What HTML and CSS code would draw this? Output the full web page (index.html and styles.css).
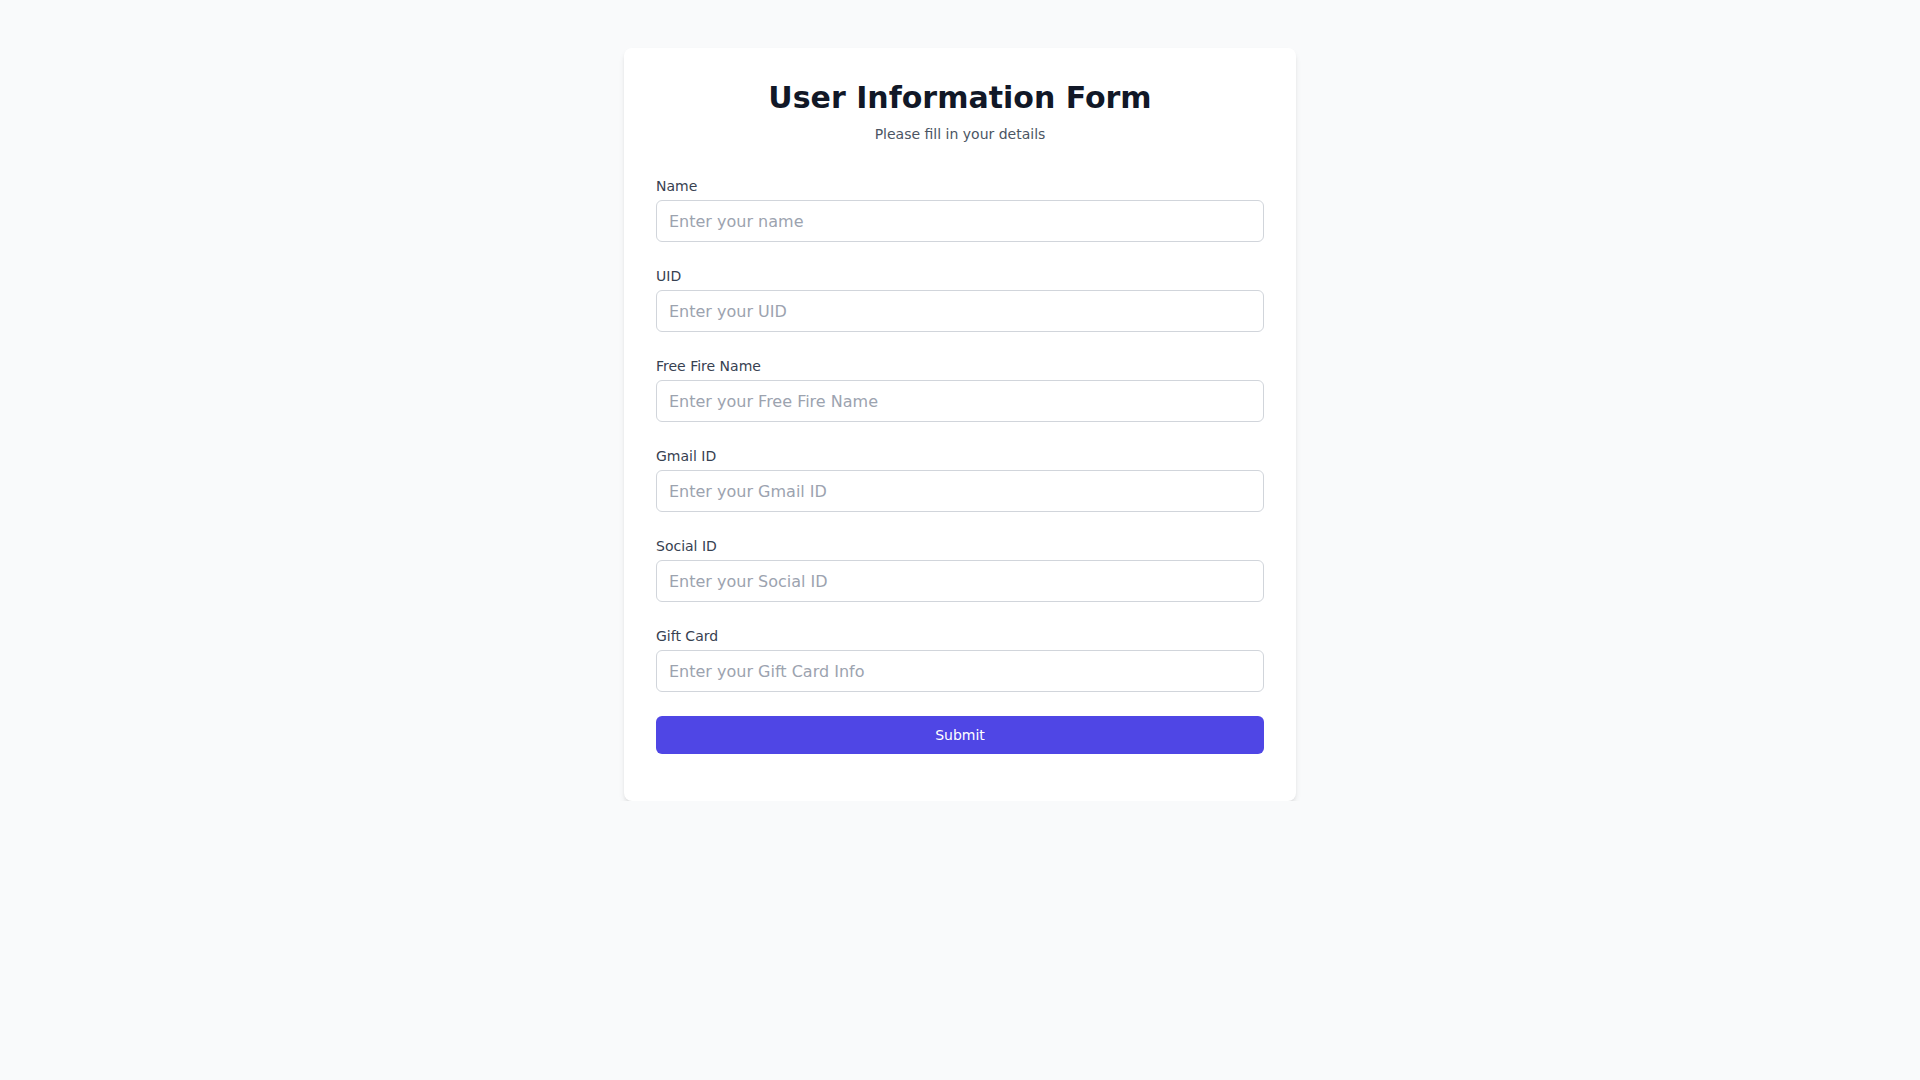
FILE: index.html
```html
<!DOCTYPE html>
<html lang="en">
<head>
<meta charset="utf-8">
<title>User Information Form</title>
<link rel="stylesheet" href="styles.css">
</head>
<body>
<main class="page">
  <div class="card">
    <header class="head">
      <h1 class="title">User Information Form</h1>
      <p class="subtitle">Please fill in your details</p>
    </header>
    <form class="form">
      <div class="field">
        <label class="label" for="name">Name</label>
        <input class="input" id="name" type="text" placeholder="Enter your name">
      </div>
      <div class="field">
        <label class="label" for="uid">UID</label>
        <input class="input" id="uid" type="text" placeholder="Enter your UID">
      </div>
      <div class="field">
        <label class="label" for="ffname">Free Fire Name</label>
        <input class="input" id="ffname" type="text" placeholder="Enter your Free Fire Name">
      </div>
      <div class="field">
        <label class="label" for="gmail">Gmail ID</label>
        <input class="input" id="gmail" type="text" placeholder="Enter your Gmail ID">
      </div>
      <div class="field">
        <label class="label" for="social">Social ID</label>
        <input class="input" id="social" type="text" placeholder="Enter your Social ID">
      </div>
      <div class="field">
        <label class="label" for="gift">Gift Card</label>
        <input class="input" id="gift" type="text" placeholder="Enter your Gift Card Info">
      </div>
      <button class="submit" type="button">Submit</button>
    </form>
  </div>
</main>
</body>
</html>
```

FILE: styles.css
```css
* { box-sizing: border-box; }
html, body {
  margin: 0;
  padding: 0;
  background: #f9fafb;
  font-family: "DejaVu Sans", "Liberation Sans", sans-serif;
  color: #111827;
}
.page {
  display: flex;
  justify-content: center;
  padding-top: 48px;
}
.card {
  width: 672px;
  background: #ffffff;
  border-radius: 8px;
  box-shadow: 0 4px 6px -1px rgba(0,0,0,0.1), 0 2px 4px -2px rgba(0,0,0,0.1);
  padding: 32px 32px 47px;
}
.head {
  text-align: center;
  margin-bottom: 32px;
}
.title {
  margin: 0 0 8px;
  font-size: 30px;
  line-height: 36px;
  font-weight: 700;
  color: #111827;
}
.subtitle {
  margin: 0;
  font-size: 14px;
  line-height: 20px;
  color: #4b5563;
}
.form {
  display: flex;
  flex-direction: column;
  gap: 24px;
}
.field {
  display: flex;
  flex-direction: column;
  gap: 4px;
}
.label {
  font-size: 14px;
  line-height: 20px;
  color: #374151;
}
.input {
  width: 100%;
  height: 42px;
  padding: 8px 12px;
  border: 1px solid #d1d5db;
  border-radius: 6px;
  font-family: inherit;
  font-size: 16px;
  line-height: 24px;
  color: #111827;
  background: #ffffff;
  outline: none;
}
.input::placeholder { color: #9ca3af; }
.submit {
  height: 38px;
  width: 100%;
  border: 0;
  border-radius: 6px;
  background: #4f46e5;
  color: #ffffff;
  font-family: inherit;
  font-size: 14px;
  line-height: 20px;
}
```
